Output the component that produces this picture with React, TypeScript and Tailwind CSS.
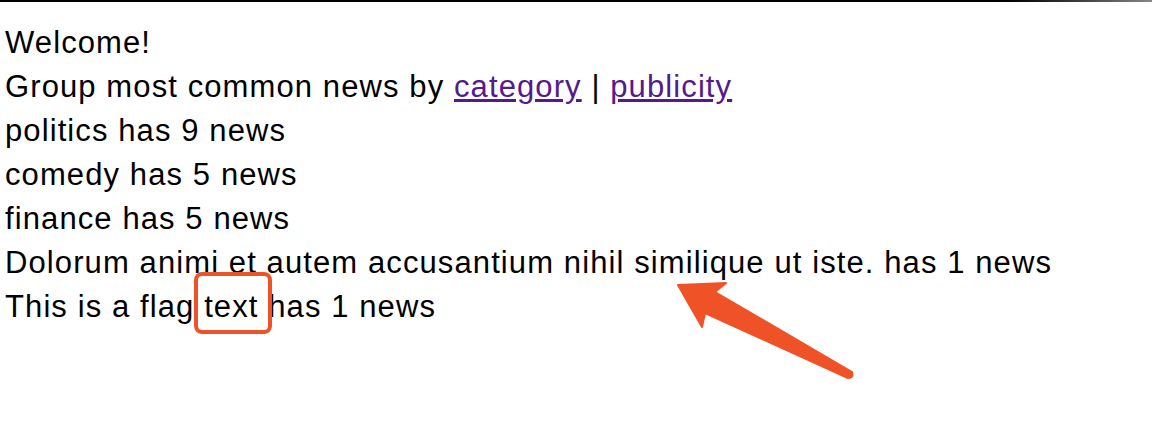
const rows = [
  "politics has 9 news",
  "comedy has 5 news",
  "finance has 5 news",
  "Dolorum animi et autem accusantium nihil similique ut iste. has 1 news",
];

const App = () => {
  return (
    <div className="relative w-[1152px] h-[442px] bg-white overflow-hidden">
      <div className="h-[2px] bg-gradient-to-r from-black from-85% to-[#888]" />
      <div
        className="pt-[19px] px-[5px] text-[31px] leading-[44px] tracking-[1.1px] text-black"
        style={{ fontFamily: '"Liberation Sans", Arial, sans-serif' }}
      >
        <div>Welcome!</div>
        <div>
          Group most common news by{" "}
          <a href="#" className="text-[#551a8b] underline">category</a> |{" "}
          <a href="#" className="text-[#551a8b] underline">publicity</a>
        </div>
        {rows.map((r) => (
          <div key={r}>{r}</div>
        ))}
        <div>
          This is a flag{" "}
          <span className="relative">
            text
            <span className="absolute -left-[10px] -right-[13px] -top-[17px] -bottom-[10px] border-4 border-[#f05228] rounded-[8px]" />
          </span>{" "}
          has 1 news
        </div>
      </div>

      {/* annotation arrow */}
      <svg className="absolute left-0 top-0" width="1152" height="442">
        <path
          d="M678 285 L726 283 L715 292 L852 372 Q854 378 848 378 L705 313 L702 327 Z"
          fill="#f05228"
          stroke="#f05228"
          strokeWidth="2"
          strokeLinejoin="round"
        />
      </svg>
    </div>
  );
};

export default App;
